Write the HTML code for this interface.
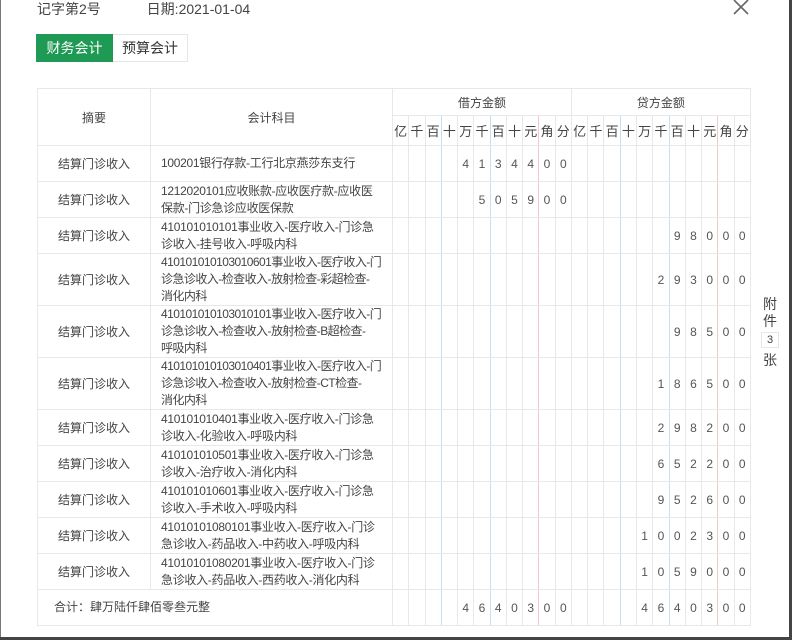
<!DOCTYPE html>
<html><head><meta charset="utf-8"><style>
*{margin:0;padding:0;box-sizing:border-box}
body{width:792px;height:640px;background:#fff;position:relative;overflow:hidden;font-family:"Liberation Sans","Noto Sans CJK SC",sans-serif;color:#333}
.edgeR{position:absolute;right:0;top:0;width:3px;height:640px;background:#444;z-index:2}
.edgeB{position:absolute;left:0;bottom:0;width:792px;height:3px;background:#444;z-index:2}
.edgeL{position:absolute;left:0;top:0;width:1px;height:640px;background:#777}
.title{position:absolute;top:0;left:37px;font-size:14px;line-height:18px;color:#444}
.title span{margin-right:42px}
.close{position:absolute;left:731px;top:0;width:20px;height:16px}
.tabs{position:absolute;left:36px;top:34px;height:28px;display:flex;font-size:14px}
.tab1{background:#1f9a55;color:#fff;width:77px;line-height:28px;text-align:center}
.tab2{border:1px solid #e6e6e6;border-left:none;width:75px;line-height:26px;text-align:center;color:#333}
table{position:absolute;left:37px;top:88px;border-collapse:collapse;table-layout:fixed;width:713px;font-size:12px}
td{border:1px solid #e8e8e8;padding:0;text-align:center;color:#444}
td.s{text-align:left;padding:0 0 0 10px;line-height:17px;white-space:nowrap;overflow:hidden;letter-spacing:-0.3px}
td.s.w{letter-spacing:-0.55px}
td.n{color:#555}
tr.d td:nth-child(5),tr.d td:nth-child(8),tr.d td:nth-child(16),tr.d td:nth-child(19),
tr.h2 td:nth-child(3),tr.h2 td:nth-child(6),tr.h2 td:nth-child(14),tr.h2 td:nth-child(17),
tr.t td:nth-child(4),tr.t td:nth-child(7),tr.t td:nth-child(15),tr.t td:nth-child(18){border-right-color:#c6e0f0}
tr.d td:nth-child(11),tr.d td:nth-child(22),tr.h2 td:nth-child(9),tr.h2 td:nth-child(20),tr.t td:nth-child(10),tr.t td:nth-child(21){border-right-color:#f2c8c8}
tr.h2 td{font-size:13px;color:#444}
.side{position:absolute;left:761px;top:296px;width:18px;font-size:14px;color:#444;text-align:center;line-height:17px}
.side .box{border:1px solid #e6e6e6;font-size:11px;line-height:14px;margin:2px 0 4px}
</style></head><body>
<div class="edgeL"></div><div class="edgeR"></div><div class="edgeB"></div>
<div class="title"><span>记字第2号</span> 日期:2021-01-04</div>
<svg class="close" viewBox="0 0 20 16"><path d="M3 0 L17 14 M17 0 L3 14" stroke="#666" stroke-width="1.6" fill="none"/></svg>
<div class="tabs"><div class="tab1">财务会计</div><div class="tab2">预算会计</div></div>
<table>
<colgroup><col style="width:113px"><col style="width:242px"><col span="22" style="width:16.27px"></colgroup>
<tr style="height:27px"><td rowspan="2">摘要</td><td rowspan="2">会计科目</td><td colspan="11">借方金额</td><td colspan="11">贷方金额</td></tr>
<tr class="h2" style="height:30px"><td>亿</td><td>千</td><td>百</td><td>十</td><td>万</td><td>千</td><td>百</td><td>十</td><td>元</td><td>角</td><td>分</td><td>亿</td><td>千</td><td>百</td><td>十</td><td>万</td><td>千</td><td>百</td><td>十</td><td>元</td><td>角</td><td>分</td></tr>
<tr class="d" style="height:36px"><td>结算门诊收入</td><td class="s">100201银行存款-工行北京燕莎东支行</td><td></td><td></td><td></td><td></td><td class="n">4</td><td class="n">1</td><td class="n">3</td><td class="n">4</td><td class="n">4</td><td class="n">0</td><td class="n">0</td><td></td><td></td><td></td><td></td><td></td><td></td><td></td><td></td><td></td><td></td><td></td></tr>
<tr class="d" style="height:36px"><td>结算门诊收入</td><td class="s">1212020101应收账款-应收医疗款-应收医<br>保款-门诊急诊应收医保款</td><td></td><td></td><td></td><td></td><td></td><td class="n">5</td><td class="n">0</td><td class="n">5</td><td class="n">9</td><td class="n">0</td><td class="n">0</td><td></td><td></td><td></td><td></td><td></td><td></td><td></td><td></td><td></td><td></td><td></td></tr>
<tr class="d" style="height:36px"><td>结算门诊收入</td><td class="s">410101010101事业收入-医疗收入-门诊急<br>诊收入-挂号收入-呼吸内科</td><td></td><td></td><td></td><td></td><td></td><td></td><td></td><td></td><td></td><td></td><td></td><td></td><td></td><td></td><td></td><td></td><td></td><td class="n">9</td><td class="n">8</td><td class="n">0</td><td class="n">0</td><td class="n">0</td></tr>
<tr class="d" style="height:52px"><td>结算门诊收入</td><td class="s w">410101010103010601事业收入-医疗收入-门<br>诊急诊收入-检查收入-放射检查-彩超检查-<br>消化内科</td><td></td><td></td><td></td><td></td><td></td><td></td><td></td><td></td><td></td><td></td><td></td><td></td><td></td><td></td><td></td><td></td><td class="n">2</td><td class="n">9</td><td class="n">3</td><td class="n">0</td><td class="n">0</td><td class="n">0</td></tr>
<tr class="d" style="height:52px"><td>结算门诊收入</td><td class="s w">410101010103010101事业收入-医疗收入-门<br>诊急诊收入-检查收入-放射检查-B超检查-<br>呼吸内科</td><td></td><td></td><td></td><td></td><td></td><td></td><td></td><td></td><td></td><td></td><td></td><td></td><td></td><td></td><td></td><td></td><td></td><td class="n">9</td><td class="n">8</td><td class="n">5</td><td class="n">0</td><td class="n">0</td></tr>
<tr class="d" style="height:52px"><td>结算门诊收入</td><td class="s w">410101010103010401事业收入-医疗收入-门<br>诊急诊收入-检查收入-放射检查-CT检查-<br>消化内科</td><td></td><td></td><td></td><td></td><td></td><td></td><td></td><td></td><td></td><td></td><td></td><td></td><td></td><td></td><td></td><td></td><td class="n">1</td><td class="n">8</td><td class="n">6</td><td class="n">5</td><td class="n">0</td><td class="n">0</td></tr>
<tr class="d" style="height:36px"><td>结算门诊收入</td><td class="s">410101010401事业收入-医疗收入-门诊急<br>诊收入-化验收入-呼吸内科</td><td></td><td></td><td></td><td></td><td></td><td></td><td></td><td></td><td></td><td></td><td></td><td></td><td></td><td></td><td></td><td></td><td class="n">2</td><td class="n">9</td><td class="n">8</td><td class="n">2</td><td class="n">0</td><td class="n">0</td></tr>
<tr class="d" style="height:36px"><td>结算门诊收入</td><td class="s">410101010501事业收入-医疗收入-门诊急<br>诊收入-治疗收入-消化内科</td><td></td><td></td><td></td><td></td><td></td><td></td><td></td><td></td><td></td><td></td><td></td><td></td><td></td><td></td><td></td><td></td><td class="n">6</td><td class="n">5</td><td class="n">2</td><td class="n">2</td><td class="n">0</td><td class="n">0</td></tr>
<tr class="d" style="height:36px"><td>结算门诊收入</td><td class="s">410101010601事业收入-医疗收入-门诊急<br>诊收入-手术收入-呼吸内科</td><td></td><td></td><td></td><td></td><td></td><td></td><td></td><td></td><td></td><td></td><td></td><td></td><td></td><td></td><td></td><td></td><td class="n">9</td><td class="n">5</td><td class="n">2</td><td class="n">6</td><td class="n">0</td><td class="n">0</td></tr>
<tr class="d" style="height:36px"><td>结算门诊收入</td><td class="s">41010101080101事业收入-医疗收入-门诊<br>急诊收入-药品收入-中药收入-呼吸内科</td><td></td><td></td><td></td><td></td><td></td><td></td><td></td><td></td><td></td><td></td><td></td><td></td><td></td><td></td><td></td><td class="n">1</td><td class="n">0</td><td class="n">0</td><td class="n">2</td><td class="n">3</td><td class="n">0</td><td class="n">0</td></tr>
<tr class="d" style="height:36px"><td>结算门诊收入</td><td class="s">41010101080201事业收入-医疗收入-门诊<br>急诊收入-药品收入-西药收入-消化内科</td><td></td><td></td><td></td><td></td><td></td><td></td><td></td><td></td><td></td><td></td><td></td><td></td><td></td><td></td><td></td><td class="n">1</td><td class="n">0</td><td class="n">5</td><td class="n">9</td><td class="n">0</td><td class="n">0</td><td class="n">0</td></tr>
<tr class="t" style="height:36px"><td colspan="2" class="s" style="padding-left:16px;letter-spacing:0">合计：肆万陆仟肆佰零叁元整</td><td></td><td></td><td></td><td></td><td class="n">4</td><td class="n">6</td><td class="n">4</td><td class="n">0</td><td class="n">3</td><td class="n">0</td><td class="n">0</td><td></td><td></td><td></td><td></td><td class="n">4</td><td class="n">6</td><td class="n">4</td><td class="n">0</td><td class="n">3</td><td class="n">0</td><td class="n">0</td></tr>
</table>
<div class="side">附<br>件<div class="box">3</div>张</div>
</body></html>
